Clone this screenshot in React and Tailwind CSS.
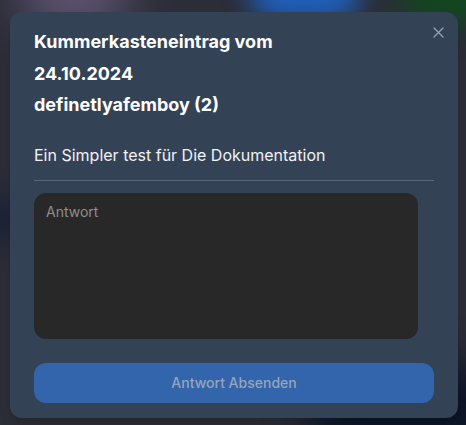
import React from "react";

export default function App() {
  return (
    <div
      className="relative h-[425px] w-full overflow-hidden bg-[#2b2d37]"
      style={{ fontFamily: "Inter, 'Noto Sans', sans-serif" }}
    >
      {/* blurred backdrop blobs */}
      <div className="absolute left-[20px] top-[-40px] h-[70px] w-[110px] rounded-full bg-[#7a6a92] opacity-70 blur-[25px]" />
      <div className="absolute left-[250px] top-[-30px] h-[50px] w-[110px] rounded-full bg-[#1f62c0] blur-[14px]" />
      <div className="absolute left-[400px] top-[-30px] h-[50px] w-[120px] rounded-full bg-[#0f4a1c] blur-[16px]" />
      <div className="absolute left-[-40px] top-[200px] h-[40px] w-[90px] rounded-full bg-[#1b2338] blur-[14px]" />
      <div className="absolute right-[-40px] bottom-[-30px] h-[90px] w-[200px] rounded-full bg-[#0b1426] blur-[20px]" />

      <div className="relative flex pl-[10px] pt-[12px]">
        <div className="relative flex h-[406px] w-[448px] flex-col rounded-[12px] bg-[#344256] px-6 pt-[14px] pb-[15px] shadow-lg">
          <button className="absolute right-[10px] top-[10px] flex h-[20px] w-[20px] items-center justify-center text-[#9aa3b0]">
            <svg width="11" height="11" viewBox="0 0 11 11" fill="none">
              <path d="M1 1L10 10M10 1L1 10" stroke="currentColor" strokeWidth="1.3" strokeLinecap="round" />
            </svg>
          </button>
          <div className="flex flex-col text-[18px] font-bold leading-[31.5px] text-white">
            <div>Kummerkasteneintrag vom</div>
            <div>24.10.2024</div>
            <div>definetlyafemboy (2)</div>
          </div>
          <p className="mt-[22px] text-[16px] leading-[24px] text-[#f1f3f5]">
            Ein Simpler test für Die Dokumentation
          </p>
          <div className="mt-[13px] h-px w-full bg-[#56657a]" />
          <textarea
            placeholder="Antwort"
            className="mt-[12px] h-[146px] w-[384px] resize-none rounded-[12px] bg-[#282828] px-3 py-[8px] text-[14px] text-white outline-none placeholder:text-[#8e8e8e]"
          />
          <button className="mt-[24px] h-[40px] w-full rounded-[12px] bg-[#3265ac] text-[14px] font-medium text-[#97a5b8]">
            Antwort Absenden
          </button>
        </div>
      </div>
    </div>
  );
}
